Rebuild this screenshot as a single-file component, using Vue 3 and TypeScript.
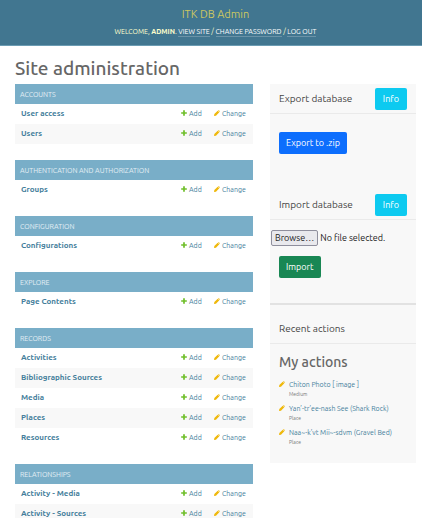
<script setup lang="ts">
interface AppModule {
  name: string
  models: string[]
}

interface Action {
  title: string
  kind: string
}

const modules: AppModule[] = [
  { name: 'Accounts', models: ['User access', 'Users'] },
  { name: 'Authentication and Authorization', models: ['Groups'] },
  { name: 'Configuration', models: ['Configurations'] },
  { name: 'Explore', models: ['Page Contents'] },
  { name: 'Records', models: ['Activities', 'Bibliographic Sources', 'Media', 'Places', 'Resources'] },
  { name: 'Relationships', models: ['Activity - Media', 'Activity - Sources'] },
]

const actions: Action[] = [
  { title: 'Chiton Photo [ image ]', kind: 'Medium' },
  { title: 'Yan’-tr’ee-nash See (Shark Rock)', kind: 'Place' },
  { title: 'Naa~-k’vt Mii~-sdvm (Gravel Bed)', kind: 'Place' },
]
</script>

<template>
  <div class="page">
    <header class="header">
      <a class="brand" href="#">ITK DB Admin</a>
      <nav class="user-tools">
        Welcome, <strong>admin</strong>.
        <a href="#">View site</a> / <a href="#">Change password</a> / <a href="#">Log out</a>
      </nav>
    </header>

    <main class="content">
      <h1>Site administration</h1>
      <div class="columns">
        <div class="modules">
          <table v-for="mod in modules" :key="mod.name" class="module">
            <caption><a href="#">{{ mod.name }}</a></caption>
            <tbody>
              <tr v-for="model in mod.models" :key="model">
                <th scope="row"><a href="#">{{ model }}</a></th>
                <td class="add">
                  <a href="#">
                    <svg class="icon" viewBox="0 0 7 7" aria-hidden="true">
                      <path d="M2.5 .2h2v2.3h2.3v2H4.5v2.3h-2V4.5H.2v-2h2.3z" fill="#70bf2b" />
                    </svg>
                    Add
                  </a>
                </td>
                <td class="change">
                  <a href="#">
                    <svg class="icon" viewBox="0 0 7 7" aria-hidden="true">
                      <path d="M0 7 .4 4.7 4.3.8 6.2 2.7 2.3 6.6zM4.7.4Q5.2-.1 5.7.3l1 1q.4.5-.1 1z" fill="#efb80b" />
                    </svg>
                    Change
                  </a>
                </td>
              </tr>
            </tbody>
          </table>
        </div>

        <aside class="sidebar">
          <section class="export">
            <div class="panel-head">
              <h2>Export database</h2>
              <button type="button" class="btn info">Info</button>
            </div>
            <button type="button" class="btn primary">Export to .zip</button>
          </section>

          <section class="import">
            <div class="panel-head">
              <h2>Import database</h2>
              <button type="button" class="btn info">Info</button>
            </div>
            <label class="file">
              <input type="file" />
              <span class="browse">Browse…</span>
              <span>No file selected.</span>
            </label>
            <button type="button" class="btn success">Import</button>
          </section>

          <section class="recent">
            <h2>Recent actions</h2>
            <h3>My actions</h3>
            <ul>
              <li v-for="action in actions" :key="action.title">
                <svg class="icon" viewBox="0 0 7 7" aria-hidden="true">
                  <path d="M0 7 .4 4.7 4.3.8 6.2 2.7 2.3 6.6zM4.7.4Q5.2-.1 5.7.3l1 1q.4.5-.1 1z" fill="#efb80b" />
                </svg>
                <div>
                  <a href="#">{{ action.title }}</a>
                  <small>{{ action.kind }}</small>
                </div>
              </li>
            </ul>
          </section>
        </aside>
      </div>
    </main>
  </div>
</template>

<style>
html {
  overflow: hidden;
}

body {
  background: #fff;
}
</style>

<style scoped>
.page {
  font-family: Ubuntu, "Noto Sans", "Open Sans", sans-serif;
  font-size: 8px;
  line-height: 12px;
  color: #444;
}

a {
  color: #447e9b;
  text-decoration: none;
}

h1,
h2,
h3 {
  margin: 0;
  font-weight: 400;
}

.header {
  display: flex;
  flex-direction: column;
  align-items: center;
  gap: 4px;
  padding: 6px 6px 8px 15px;
  background: #417690;
  border-bottom: 1px solid #6b9cb3;
}

.brand {
  font-size: 11px;
  line-height: 16px;
  color: #cdc860;
}

.user-tools {
  font-size: 7px;
  line-height: 11px;
  text-transform: uppercase;
  color: #ffc;
}

.user-tools a {
  padding-bottom: 1px;
  color: #fff;
  border-bottom: 1px solid #6b93a8;
}

.content {
  padding: 10px 6px 0 15px;
}

h1 {
  margin-bottom: 4px;
  font-size: 19px;
  line-height: 24px;
  font-weight: 500;
  color: #666;
}

.columns {
  display: grid;
  grid-template-columns: minmax(0, 238fr) minmax(0, 146fr);
  gap: 17px;
  align-items: start;
}

.modules {
  display: grid;
  gap: 16px;
}

.module {
  width: 100%;
  border-collapse: collapse;
}

.module caption {
  box-sizing: border-box;
  height: 20px;
  padding: 0 5px;
  font-size: 7px;
  line-height: 20px;
  text-align: left;
  text-transform: uppercase;
  background: #79aec8;
}

.module caption a {
  color: #e4eff5;
}

.module tr:nth-child(even) {
  background: #f8f8f8;
}

.module th,
.module td {
  height: 20px;
  padding: 0;
  text-align: left;
  line-height: 12px;
}

.module th {
  padding-left: 6px;
  font-weight: 700;
}

.module td {
  font-size: 7px;
}

.module td a {
  display: flex;
  align-items: center;
  gap: 2px;
  padding-bottom: 2px;
}

.module .add {
  width: 33px;
}

.module .change {
  width: 39px;
}

.icon {
  flex: none;
  width: 6px;
  height: 6px;
}

.sidebar {
  background: #f8f8f8;
}

.sidebar h2 {
  font-size: 10px;
  line-height: 14px;
}

.panel-head {
  display: flex;
  align-items: center;
  justify-content: space-between;
  padding: 4px 9px 3px;
  border-bottom: 1px solid #eaeaea;
}

.btn {
  height: 22px;
  padding: 0 7px;
  font: inherit;
  font-size: 9px;
  line-height: 20px;
  color: #fff;
  border: 0;
  border-radius: 2px;
}

.info {
  padding: 0 8px;
  background: #0dcaf0;
}

.primary {
  margin: 18px 9px 36px;
  background: #0d6efd;
}

.success {
  margin: 10px 9px 25px;
  background: #198754;
}

.import {
  border-bottom: 2px solid #e2e2e2;
}

.file {
  display: flex;
  align-items: center;
  gap: 2px;
  margin: 10px 1px 0;
  font-size: 9px;
  line-height: 14px;
  color: #222;
  white-space: nowrap;
}

.file input {
  position: absolute;
  width: 1px;
  height: 1px;
  opacity: 0;
}

.browse {
  padding: 0 3px;
  background: #e9e9ed;
  border: 1px solid #8f8f9d;
  border-radius: 2px;
}

.recent {
  padding-bottom: 16px;
}

.recent h2 {
  padding: 17px 9px 7px;
  border-bottom: 1px solid #eaeaea;
}

.recent h3 {
  padding: 8px 9px 0;
  font-size: 14px;
  line-height: 20px;
  font-weight: 500;
  color: #666;
}

.recent ul {
  display: grid;
  gap: 3px;
  margin: 6px 9px 0;
  padding: 0;
  list-style: none;
}

.recent li {
  display: flex;
  gap: 4px;
  font-size: 7px;
  white-space: nowrap;
}

.recent li .icon {
  margin-top: 3px;
}

.recent small {
  display: block;
  font-size: 5px;
  line-height: 9px;
  color: #777;
}
</style>
